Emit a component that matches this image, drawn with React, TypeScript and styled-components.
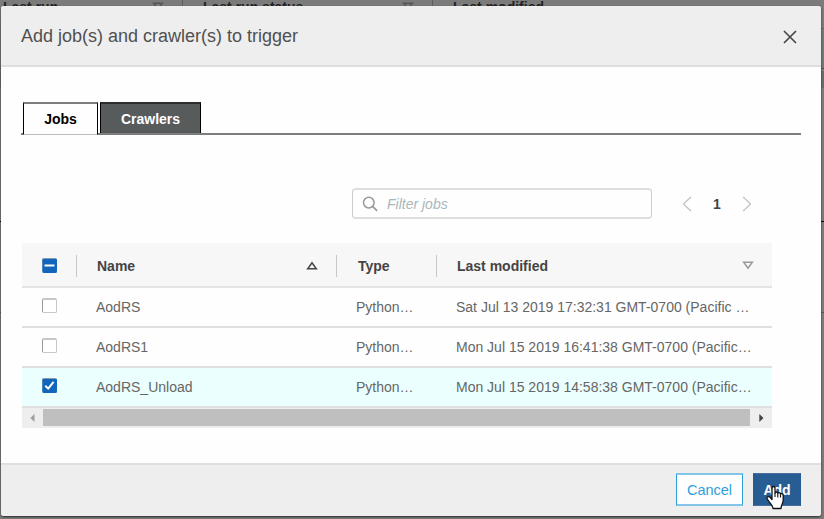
import React from 'react';
import styled, { createGlobalStyle } from 'styled-components';

const Global = createGlobalStyle`
  *, *::before, *::after { box-sizing: border-box; }
  body { margin: 0; overflow: hidden; background: #7b7b7b; font: 14px/20px "Liberation Sans", Arial, sans-serif; color: #666; }
  button { font: inherit; margin: 0; }
`;

const Page = styled.div`
  position: relative;
  width: 824px;
  height: 519px;
  overflow: hidden;
  background: #7b7b7b;
`;

const BackHead = styled.div`
  display: grid;
  grid-template-columns: 183px 250px 1fr;
  height: 28px;
  margin-top: -3px;
  margin-bottom: -1px;
`;

const BackCell = styled.div`
  display: flex;
  align-items: flex-start;
  justify-content: space-between;
  padding: 0 18px 0 20px;
  border-right: 1px solid #5e5e5e;
  color: #222;
  font-weight: 700;
  line-height: 20px;
  &:first-child { padding-left: 3px; }
  &:last-child { border-right: 0; }
  svg { margin-top: 5px; }
`;

const BackRow = styled.div<{ $h: number; $bg?: string; $line?: string }>`
  height: ${p => p.$h}px;
  background: ${p => p.$bg || '#7b7b7b'};
  border-top: 1px solid ${p => p.$line || '#686868'};
`;

const Modal = styled.section`
  position: absolute;
  left: 1px;
  top: 6px;
  width: 820px;
  height: 510px;
  display: flex;
  flex-direction: column;
  background: #fefefe;
  border-radius: 3px;
  overflow: hidden;
  box-shadow: 0 1px 2px rgba(0, 0, 0, 0.65);
`;

const ModalHead = styled.header`
  display: flex;
  justify-content: space-between;
  height: 61px;
  padding: 19px 24px 0 20px;
  background: #eee;
  border-bottom: 2px solid #dfdfdf;
`;

const Title = styled.h1`
  margin: 0;
  font-size: 18px;
  line-height: 22px;
  font-weight: 400;
  color: #505050;
`;

const CloseButton = styled.button`
  display: flex;
  padding: 5px 0 0;
  width: 14px;
  height: 20px;
  border: 0;
  background: none;
`;

const Body = styled.div`
  flex: 1;
  padding: 35px 20px 0 21px;
`;

const Tabs = styled.div`
  display: flex;
  gap: 2px;
  height: 33px;
  margin-left: -1px;
  padding-left: 2px;
  border-bottom: 2px solid #7d7d7d;
`;

const Tab = styled.button<{ $active?: boolean }>`
  width: ${p => (p.$active ? 75 : 101)}px;
  height: ${p => (p.$active ? 33 : 31)}px;
  padding: ${p => (p.$active ? '0 0 1px' : '1px 0 0')};
  line-height: 28px;
  display: flex;
  align-items: flex-start;
  justify-content: center;
  font-weight: 700;
  color: ${p => (p.$active ? '#000' : '#fff')};
  background: ${p => (p.$active ? '#fefefe' : '#585b5c')};
  border: 1px solid #000;
  border-top: ${p => (p.$active ? '2px solid #7d7d7d' : '2px solid #2b2d2e')};
  border-bottom: ${p => (p.$active ? '1px solid #bcbcbc' : '0')};
  span { margin-top: ${p => (p.$active ? 1 : 0)}px; }
`;

const Tools = styled.div`
  display: flex;
  align-items: center;
  margin: 53px 0 0 330px;
`;

const Search = styled.div`
  display: flex;
  align-items: center;
  gap: 9px;
  width: 300px;
  height: 31px;
  padding-left: 9px;
  border: 2px solid #dedede;
  border-width: 2px 1px;
  border-left-color: #ccc;
  border-right-color: #ccc;
  border-radius: 4px;
  color: #aab7b8;
  font-style: italic;
`;

const Pager = styled.div`
  display: flex;
  align-items: center;
  justify-content: space-between;
  width: 70px;
  margin-left: 30px;
  color: #444;
  font-weight: 700;
`;

const Table = styled.div`
  width: 750px;
  margin-top: 24px;
`;

const Row = styled.div<{ $selected?: boolean }>`
  display: grid;
  grid-template-columns: 54px 260px 100px 336px;
  height: 40px;
  align-items: center;
  background: ${p => (p.$selected ? '#ebfffe' : 'transparent')};
  border-bottom: 2px solid #e0e0e0;
`;

const HeadRow = styled(Row)`
  height: 45px;
  padding-top: 2px;
  background: #f7f7f7;
  border-bottom: 2px solid #e4e4e4;
  color: #444;
  font-weight: 700;
`;

const CheckCell = styled.div<{ $raised?: boolean }>`
  display: flex;
  padding-left: 20px;
  padding-bottom: ${p => (p.$raised ? 3 : 0)}px;
`;

const Cell = styled.div`
  padding: 0 20px 1px;
  white-space: nowrap;
  overflow: hidden;
  text-overflow: ellipsis;
`;

const HeadCell = styled.div`
  display: flex;
  align-items: center;
  justify-content: space-between;
  height: 22px;
  padding: 0 18px 0 20px;
  border-left: 1px solid #c8c8c8;
`;

const TypeHead = styled(HeadCell)`
  padding-left: 21px;
`;

const Box = styled.span<{ $on?: boolean }>`
  display: flex;
  align-items: center;
  justify-content: center;
  width: 15px;
  height: 15px;
  border: 1px solid ${p => (p.$on ? '#1166bb' : '#c4c8c9')};
  border-top: ${p => (p.$on ? '1px solid #8798aa' : '2px solid #c2c7c7')};
  border-left-color: ${p => (p.$on ? '#4c83b8' : '#969a9a')};
  border-radius: 2px;
  background: ${p => (p.$on ? '#1166bb' : '#fff')};
`;

const ScrollBar = styled.div`
  display: grid;
  grid-template-columns: 21px 707px 22px;
  align-items: center;
  justify-items: center;
  height: 20px;
  padding: 1px 0 2px;
  background: #eee;
`;

const Thumb = styled.div`
  width: 100%;
  height: 17px;
  background: #bfbfbf;
`;

const Foot = styled.footer`
  display: flex;
  justify-content: flex-end;
  gap: 10px;
  height: 53px;
  padding: 8px 20px 0;
  background: #eee;
  border-top: 2px solid #dfdfdf;
`;

const Button = styled.button<{ $primary?: boolean }>`
  width: ${p => (p.$primary ? 48 : 67)}px;
  height: 33px;
  padding: 0;
  color: ${p => (p.$primary ? '#fff' : '#2f9fdc')};
  font-weight: ${p => (p.$primary ? 700 : 400)};
  font-size: ${p => (p.$primary ? 14 : 14.5)}px;
  background: ${p => (p.$primary ? '#285d94' : '#fefefe')};
  border: 1px solid ${p => (p.$primary ? '#285d94' : '#2f9fdc')};
  border-top: ${p => (p.$primary ? '1px solid #466f9f' : '2px solid #82c5e9')};
  border-bottom: ${p => (p.$primary ? '1px solid #466f9f' : '2px solid #82c5e9')};
`;

const Pointer = styled.svg`
  position: absolute;
  left: 766px;
  top: 485px;
`;

const Down = ({ color }: { color: string }) => (
  <svg width="12" height="9" viewBox="0 0 12 9">
    <path d="M1.7 1.3h8.6L6 7.3z" fill="none" stroke={color} strokeWidth="1.5" />
  </svg>
);

const Up = () => (
  <svg width="12" height="9" viewBox="0 0 12 9">
    <path d="M1.7 7.7h8.6L6 1.7z" fill="none" stroke="#444" strokeWidth="1.5" />
  </svg>
);

const Chevron = ({ right }: { right?: boolean }) => (
  <svg width="10" height="16" viewBox="0 0 10 16">
    <path d={right ? 'M1.2 1l7.3 7-7.3 7' : 'M8.8 1L1.5 8l7.3 7'} fill="none" stroke="#c3c3c3" strokeWidth="1.3" />
  </svg>
);

const jobs = [
  { name: 'AodRS', modified: 'Sat Jul 13 2019 17:32:31 GMT-0700 (Pacific …', selected: false },
  { name: 'AodRS1', modified: 'Mon Jul 15 2019 16:41:38 GMT-0700 (Pacific…', selected: false },
  { name: 'AodRS_Unload', modified: 'Mon Jul 15 2019 14:58:38 GMT-0700 (Pacific…', selected: true },
];

export default function App() {
  return (
    <>
      <Global />
      <Page>
        <BackHead>
          <BackCell>Last run<Down color="#555" /></BackCell>
          <BackCell>Last run status<Down color="#555" /></BackCell>
          <BackCell>Last modified</BackCell>
        </BackHead>
        <BackRow $h={4} $line="#7b7b7b" />
        <BackRow $h={40} $bg="#737878" />
        <BackRow $h={3} $line="#555" />
        <BackRow $h={17} $bg="#686c6c" $line="#686c6c" />
        <BackRow $h={133} $line="#7b7b7b" />
        <BackRow $h={91} $line="#000" />
        <BackRow $h={207} $line="#555" />

        <Modal>
          <ModalHead>
            <Title>Add job(s) and crawler(s) to trigger</Title>
            <CloseButton aria-label="Close">
              <svg width="14" height="14" viewBox="0 0 14 14">
                <path d="M1 1l12 12M13 1L1 13" stroke="#444" strokeWidth="1.6" />
              </svg>
            </CloseButton>
          </ModalHead>
          <Body>
            <Tabs>
              <Tab $active><span>Jobs</span></Tab>
              <Tab><span>Crawlers</span></Tab>
            </Tabs>
            <Tools>
              <Search>
                <svg width="16" height="16" viewBox="0 0 16 16">
                  <circle cx="6.8" cy="6.6" r="5.3" fill="none" stroke="#999" strokeWidth="1.5" />
                  <path d="M10.6 10.4l4.5 4.5" stroke="#999" strokeWidth="1.7" />
                </svg>
                Filter jobs
              </Search>
              <Pager><Chevron /><span>1</span><Chevron right /></Pager>
            </Tools>
            <Table>
              <HeadRow>
                <CheckCell>
                  <Box $on>
                    <svg width="11" height="5" viewBox="0 0 11 5">
                      <path d="M.5 2.5h10" stroke="#fff" strokeWidth="2" />
                    </svg>
                  </Box>
                </CheckCell>
                <HeadCell>Name<Up /></HeadCell>
                <TypeHead>Type</TypeHead>
                <HeadCell>Last modified<Down color="#999" /></HeadCell>
              </HeadRow>
              {jobs.map(job => (
                <Row key={job.name} $selected={job.selected}>
                  <CheckCell $raised>
                    <Box $on={job.selected}>
                      {job.selected && (
                        <svg width="11" height="11" viewBox="0 0 11 11">
                          <path d="M1.3 5.8l2.9 2.8 5.4-6.7" fill="none" stroke="#fff" strokeWidth="2" />
                        </svg>
                      )}
                    </Box>
                  </CheckCell>
                  <Cell>{job.name}</Cell>
                  <Cell>Python…</Cell>
                  <Cell>{job.modified}</Cell>
                </Row>
              ))}
              <ScrollBar>
                <svg width="5" height="8" viewBox="0 0 5 8"><path d="M4.5 0v8L.3 4z" fill="#a0a0a0" /></svg>
                <Thumb />
                <svg width="5" height="8" viewBox="0 0 5 8"><path d="M.3 0v8l4.2-4z" fill="#444" /></svg>
              </ScrollBar>
            </Table>
          </Body>
          <Foot>
            <Button>Cancel</Button>
            <Button $primary>Add</Button>
          </Foot>
        </Modal>
        <Pointer width="19" height="25" viewBox="0 0 19 25">
          <path
            d="M6 14.5V3.5Q6 1.5 7.5 1.5T9 3.5V8q0-1 1.3-1t1.5 1.5q0-.9 1.3-.8t1.4 1.6q.2-.9 1.4-.6T17.2 10.5V15q0 2-1 4t-1.2 4.5H7q0-2-2-4.3T1.3 14q-.8-1.5.4-2.2t2.6.7z"
            fill="#fff"
            stroke="#111"
            strokeWidth="1.3"
            strokeLinejoin="round"
          />
          <path d="M9 8v4M11.8 8.5v4M14.5 9.5v3" stroke="#111" strokeWidth="1.1" />
        </Pointer>
      </Page>
    </>
  );
}
